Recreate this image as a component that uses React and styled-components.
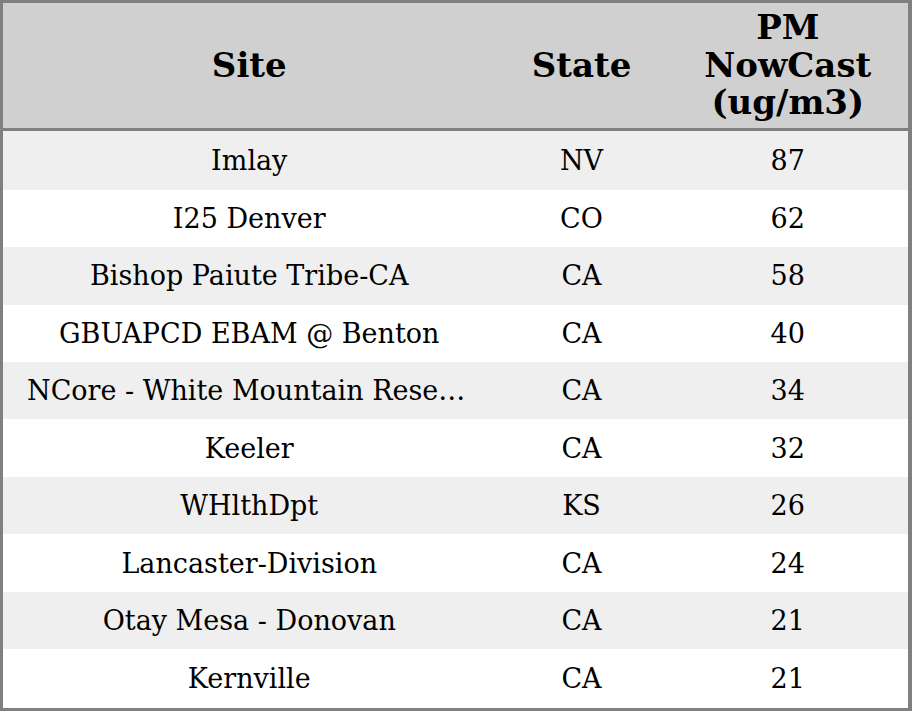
import React from 'react'
import styled, { createGlobalStyle } from 'styled-components'

const rows = [
  { site: 'Imlay', state: 'NV', pm: 87 },
  { site: 'I25 Denver', state: 'CO', pm: 62 },
  { site: 'Bishop Paiute Tribe-CA', state: 'CA', pm: 58 },
  { site: 'GBUAPCD EBAM @ Benton', state: 'CA', pm: 40 },
  { site: 'NCore - White Mountain Research Station', state: 'CA', pm: 34 },
  { site: 'Keeler', state: 'CA', pm: 32 },
  { site: 'WHlthDpt', state: 'KS', pm: 26 },
  { site: 'Lancaster-Division', state: 'CA', pm: 24 },
  { site: 'Otay Mesa - Donovan', state: 'CA', pm: 21 },
  { site: 'Kernville', state: 'CA', pm: 21 },
]

const Global = createGlobalStyle`
  html, body { margin: 0; padding: 0; background: #fff; }
  body { font-family: "DejaVu Serif", serif; }
`

const Table = styled.table`
  width: 912px;
  height: 711px;
  border-collapse: collapse;
  table-layout: fixed;
  border: 3px solid #808080;
  border-right-width: 4px;
  box-sizing: border-box;
`

const HeadCell = styled.th`
  background: #d0d0d0;
  height: 125px;
  font-size: 34px;
  line-height: 37.5px;
  font-weight: bold;
  color: #000;
  text-align: center;
  padding: 0 8px;
  border-bottom: 3px solid #808080;
`

const Row = styled.tr`
  background: ${p => (p.$odd ? '#efefef' : '#ffffff')};
`

const Cell = styled.td`
  font-size: 27px;
  color: #000;
  text-align: center;
  padding: 0 24px;
  white-space: nowrap;
  overflow: hidden;
  text-overflow: ellipsis;
`

export default function App() {
  return (
    <>
      <Global />
      <Table>
        <colgroup>
          <col style={{ width: 494 }} />
          <col style={{ width: 172 }} />
          <col />
        </colgroup>
        <thead>
          <tr>
            <HeadCell>Site</HeadCell>
            <HeadCell>State</HeadCell>
            <HeadCell>PM<br />NowCast<br />(ug/m3)</HeadCell>
          </tr>
        </thead>
        <tbody>
          {rows.map((r, i) => (
            <Row key={i} $odd={i % 2 === 0}>
              <Cell>{r.site}</Cell>
              <Cell>{r.state}</Cell>
              <Cell>{r.pm}</Cell>
            </Row>
          ))}
        </tbody>
      </Table>
    </>
  )
}
